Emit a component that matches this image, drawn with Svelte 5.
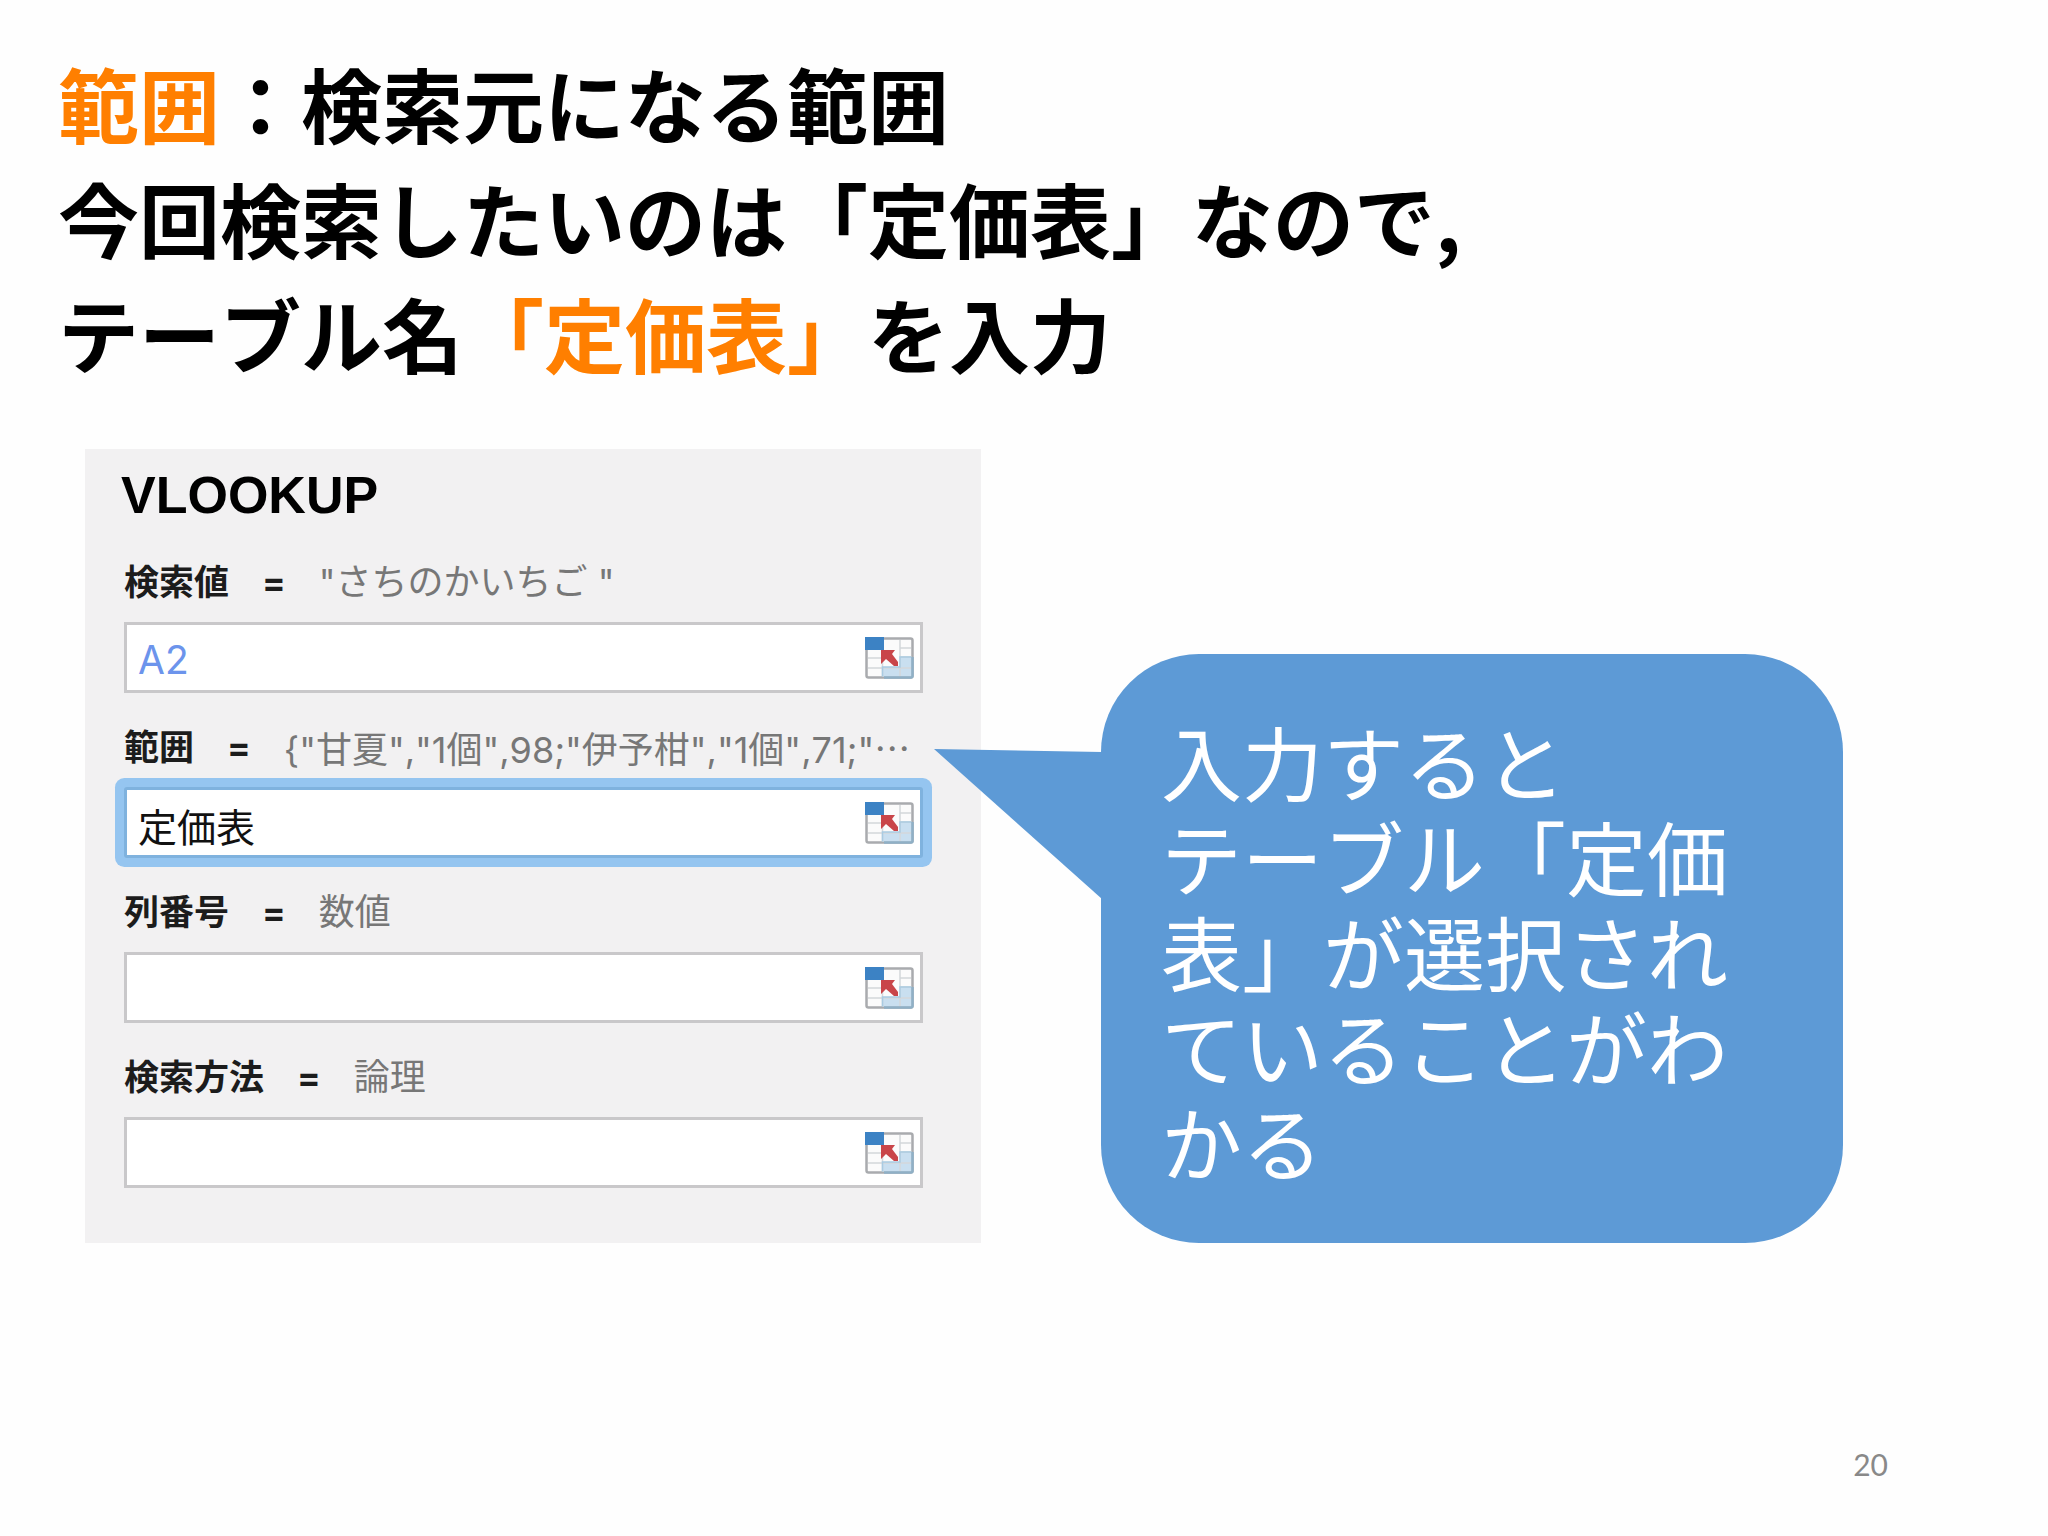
<script>
  let fields = $state([
    { id: 'lookup', label: '検索値', result: '"さちのかいちご "', value: 'A2', kind: 'ref' },
    { id: 'range', label: '範囲', result: '{"甘夏","1個",98;"伊予柑","1個",71;"', more: true, value: '定価表', kind: 'active' },
    { id: 'column', label: '列番号', result: '数値', value: '', kind: '' },
    { id: 'method', label: '検索方法', result: '論理', value: '', kind: '' }
  ]);
</script>

<main class="slide" lang="ja">
  <h1>
    <em>範囲</em>：検索元になる範囲<br />
    今回検索したいのは「定価表」なので,<br />
    テーブル名<em>「定価表」</em>を入力
  </h1>

  <div class="content">
    <form class="panel" onsubmit={(e) => e.preventDefault()}>
      <h2>VLOOKUP</h2>
      {#each fields as field (field.id)}
        <div class="group">
          <div class="caption">
            <label for={field.id}>{field.label}</label>
            <span class="equals">=</span>
            <output for={field.id}>{field.result}{#if field.more}<span class="more">…</span>{/if}</output>
          </div>
          <div class="field {field.kind}">
            <input id={field.id} type="text" autocomplete="off" bind:value={field.value} />
            <button type="button" aria-label="セル範囲を選択">
              <svg viewBox="0 0 49 42" width="49" height="42" aria-hidden="true">
                <rect x="1.5" y="1.5" width="46" height="39" rx="2" fill="#fbfbfb" stroke="#a9abae" stroke-width="2.5" />
                <path d="M35 20H46.5V39.5H17.5V30H35Z" fill="#c9dff0" />
                <path d="M3 21H17M3 31H46M35 11H46M17.5 13V39M35 3V39M35 20H46" fill="none" stroke="#d3d7da" stroke-width="1.5" />
                <path d="M17.5 39.5V30H35V20H46.5" fill="none" stroke="#a9cbe2" stroke-width="1.5" />
                <path d="M19 40.5H46Q47.5 40.5 47.5 39V20" fill="none" stroke="#8fb0c6" stroke-width="2.5" />
                <rect x="0" y="0" width="19" height="13" fill="#3c82c4" />
                <path d="M16 13H30L27 17L33 25V29H29L21 22L16 27Z" fill="#c94549" />
              </svg>
            </button>
          </div>
        </div>
      {/each}
    </form>

    <aside class="callout">
      <svg class="tail" viewBox="0 0 168 150" width="168" height="150" aria-hidden="true">
        <path d="M0 0L168 3V150Z" fill="#5d9ad6" />
      </svg>
      <p>入力すると<br />テーブル「定価表」が選択されていることがわかる</p>
    </aside>
  </div>

  <footer>20</footer>
</main>

<style>
  :global(body) {
    margin: 0;
    background: #fefefe;
  }

  .slide {
    box-sizing: border-box;
    display: flex;
    flex-direction: column;
    min-height: 100vh;
    padding: 44px 0 48px;
    color: #000;
    font-family: 'Noto Sans CJK JP', sans-serif;
    font-kerning: none;
  }

  h1 {
    margin: 0;
    padding: 0 58px;
    font-size: 81px;
    line-height: 115px;
    font-weight: 700;
  }

  em {
    color: #ff7f00;
    font-style: normal;
  }

  .content {
    display: grid;
    grid-template-columns: 896fr 742fr;
    gap: 120px;
    align-items: end;
    margin-top: 60px;
    padding: 0 205px 0 85px;
  }

  .panel {
    box-sizing: border-box;
    min-width: 0;
    padding: 16px 58px 55px 39px;
    background: #f2f1f2;
  }

  h2 {
    margin: 0 0 37px -3px;
    font: 700 52px/60px 'Liberation Sans', sans-serif;
    font-kerning: normal;
  }

  .group + .group {
    margin-top: 34px;
  }

  .caption {
    display: flex;
    gap: 33px;
    height: 40px;
    margin-bottom: 20px;
    font-family: Inter, 'Noto Sans CJK JP', sans-serif;
    font-size: 35px;
    line-height: 40px;
    white-space: nowrap;
  }

  label,
  .equals {
    color: #1c1c1c;
    font-weight: 700;
  }

  output {
    color: #777;
    font-size: 36px;
  }

  .more {
    font-family: 'Noto Sans CJK JP', sans-serif;
  }

  .field {
    box-sizing: border-box;
    display: flex;
    align-items: center;
    height: 71px;
    padding-right: 6px;
    border: 3px solid #c9c8ca;
    background: #fff;
  }

  .field.active {
    border-color: #7fb2de;
    border-radius: 3px;
    box-shadow: 0 0 0 9px #95c5f0;
  }

  input {
    flex: 1;
    min-width: 0;
    height: 100%;
    padding: 4px 0 0 11px;
    border: 0;
    outline: 0;
    background: none;
    box-sizing: border-box;
    color: #111;
    font-family: Inter, 'Noto Sans CJK JP', sans-serif;
    font-size: 39px;
  }

  .ref input {
    color: #6c94ec;
  }

  button {
    display: flex;
    padding: 0;
    border: 0;
    background: none;
  }

  .callout {
    position: relative;
    box-sizing: border-box;
    padding: 58px 60px 56px;
    border-radius: 98px;
    background: #5d9ad6;
    color: #fff;
  }

  .tail {
    position: absolute;
    top: 95px;
    left: -167px;
  }

  p {
    margin: 0;
    font-size: 81px;
    line-height: 95px;
  }

  footer {
    margin-top: auto;
    padding-right: 160px;
    color: #898989;
    font: 30px/48px Lato, sans-serif;
    text-align: right;
  }
</style>
